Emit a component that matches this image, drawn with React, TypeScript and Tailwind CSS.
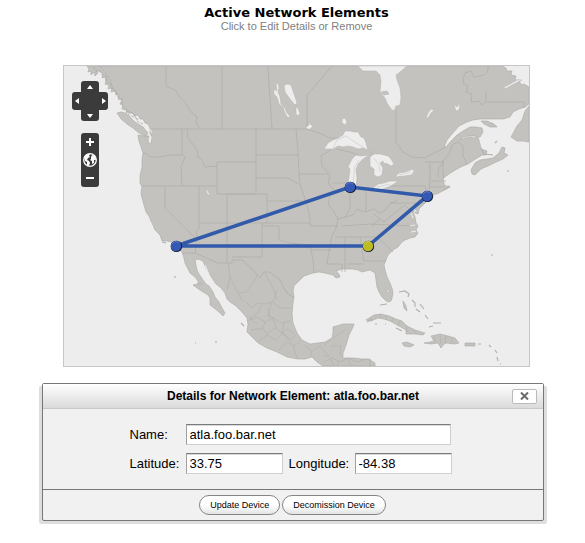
import React from "react";

const SITES = [
  { name: "losa.foo.bar.net", x: 176, y: 246, fill: "#3458b4" },
  { name: "chic.foo.bar.net", x: 350, y: 187, fill: "#3458b4" },
  { name: "newy.foo.bar.net", x: 427, y: 196, fill: "#3458b4" },
  { name: "atla.foo.bar.net", x: 368, y: 246, fill: "#bcbc22" },
];

const MAINLAND =
  "M87 66L89 69L88 72L91 71L91 75L94 72L95 76L98 73L97 70L101 72L103 74L102 78L105 77L106 81L105 84L109 85L108 89L112 88L111 92L115 91L116 95L119 95L118 99L122 100L120 104L123 105L122 109L126 110L128 113L133 113L134 116L138 115L140 119L143 119L145 123L148 124L150 128L150 133L152 138L151 143L149 144L148 140L149 136L145 136L138 135L139 141L141 147L143 153L142 160L142 167L140 176L140 183L142 187L141 193L142 198L144 205L146 212L149 216L151 221L153 225L155 230L160 235L162 241L167 241L172 242L176 247L182 252L184 258L185 263L188 269L190 273L195 277L198 281L198 284L193 285L197 288L203 292L208 295L210 298L210 305L214 308L219 312L223 316L225 313L222 308L219 302L215 297L213 292L209 286L206 284L203 280L199 274L197 270L196 265L195 260L198 259L203 261L205 266L207 270L212 278L216 284L221 288L225 293L227 299L230 302L236 306L242 312L247 318L248 324L247 332L252 337L258 343L267 348L277 352L287 357L298 359L305 359L312 357L317 362L323 366L371 366L370 359L362 359L354 358L343 358L343 353L345 348L347 342L349 335L353 327L354 324L343 324L333 327L333 333L332 338L325 342L318 343L310 344L302 340L297 333L293 323L292 313L293 303L294 297L293 291L294 286L298 282L304 276L313 273L319 272L325 273L333 275L336 278L340 277L339 274L336 271L342 269L348 269L353 269L358 270L362 272L366 271L370 270L375 273L376 280L377 287L379 292L382 297L385 300L388 302L391 301L392 298L393 293L392 288L390 283L387 277L385 270L384 265L386 260L388 255L393 250L398 247L402 242L405 240L410 238L415 237L418 233L416 230L418 226L416 223L415 217L413 212L415 209L415 213L418 214L419 209L422 206L425 203L428 199L432 197L439 193L448 188L450 186L445 186L444 183L443 179L446 176L449 174L452 172L457 169L463 166L468 164L474 160L482 155L486 155L487 151L481 149L480 144L478 137L474 138L470 137L465 138L460 140L463 137L468 136L474 136L480 137L483 132L482 128L476 127L470 127L463 131L457 135L451 141L446 147L444 147L447 140L452 134L459 126L467 122L473 120L480 119L492 119L503 119L510 117L513 112L519 109L525 107L529 104L529 87L524 84L521 85L519 80L515 80L516 76L511 75L512 71L507 71L506 68L502 66Z";
const ISLANDS = [
  "M117 113L121 112L125 113L130 117L135 122L143 127L148 133L146 136L139 133L133 128L127 124L121 119Z",
  "M481 121L487 121L494 124L497 127L490 127L484 124Z",
  "M471 170L475 163L480 160L487 159L493 158L499 153L502 147L505 148L504 153L508 155L503 159L494 163L488 166L481 169L475 175L472 174Z",
  "M529 106L525 111L522 120L517 126L511 137L517 141L523 141L529 142Z",
  "M366 320L374 315L381 314L389 316L396 319L402 321L407 326L415 330L425 333L423 335L415 334L406 334L406 330L399 326L390 321L384 319L378 318L371 321Z",
  "M424 343L430 342L434 341L431 336L440 334L448 336L455 338L459 343L454 344L447 343L444 344L441 348L438 343L431 344Z",
  "M402 343L407 342L414 345L410 347L404 346Z",
  "M465 343L475 343L475 346L465 346Z",
  "M403 301L406 306L407 311L404 308Z",
  "M370 360L375 363L375 366L370 366Z",
];
const WATER = [
  "M358 66L363 71L370 71L376 71L380 75L381 82L380 92L385 98L387 103L391 109L394 111L396 106L400 105L401 97L400 88L397 80L396 75L400 72L407 66Z",
  "M324 149L328 143L333 140L338 138L343 135L345 131L350 131L354 132L358 132L361 137L364 138L366 143L368 150L363 148L358 149L353 147L348 146L343 147L338 146L333 149Z",
  "M370 155L361 156L356 155L352 159L350 163L348 167L350 169L349 177L348 183L351 187L356 186L357 178L356 170L358 164L363 159L366 157Z",
  "M370 157L374 154L380 154L388 156L391 159L394 164L391 166L386 163L384 164L383 161L380 163L383 168L382 175L378 177L374 175L374 169L370 166Z",
  "M373 188L378 184L384 183L390 181L398 181L394 184L388 187L380 190L376 190Z",
  "M395 177L399 173L405 172L413 169L414 172L411 175L404 176Z",
  "M284 85L288 84L291 85L293 91L295 97L297 103L295 105L290 99L285 92Z",
  "M274 89L277 91L276 84L278 83L279 88L278 92L280 97L281 104L285 108L287 113L290 116L288 118L285 113L283 107L279 104L277 97L274 94Z",
  "M296 107L298 108L300 114L297 116L296 113Z",
  "M342 119L345 118L347 122L345 125L342 123Z",
  "M306 127L309 125L309 122L311 125L313 126L310 129L307 129Z",
  "M205 189L208 191L210 195L208 195Z",
  "M426 118L428 113L431 109L434 110L431 113L428 118Z",
  "M454 104L457 107L460 103L459 110L456 111Z",
  "M387 290L389 290L389 292L387 292Z",
  "M504 87L510 84L517 80L522 80L512 85L505 89Z",
];
const LAKE_ISLANDS = ["M381 92L387 91L389 94L384 95Z"];
const BORDERS = [
  "M166 66V86L175 90L179 96L185 102L191 112L197 117L196 122L199 128",
  "M151 129H306",
  "M222 66V129M268 66L272 129M307 129V95L332 66",
  "M143 153L147 154L150 157L160 157L170 155H182M182 129V154L185 157L181 167L182 186M187 129L188 138L192 143L197 150L198 157L202 160L205 167L217 166",
  "M142 186H217M217 162H256V194H217ZM165 186V208L200 243M256 129V162",
  "M199 186V229L196 232L197 237L195 253M199 223H310M227 194V262M267 194H227M267 194V223M256 178H288L293 181L298 184M256 155H298M267 201H303",
  "M296 129L298 150L299 174H328M299 174L300 184L304 196L307 205L310 218V226M262 223V257H232M262 226H279V240L290 243L310 245M310 226H338M310 250H331M310 245L313 260L314 273",
  "M336 146L329 151L321 156L322 166L330 175L328 183L334 190L330 196L328 204L334 212L338 219L336 228L332 236L329 250L327 264H342V272M333 183H349M350 192L350 208L345 218M366 192V212M338 219L345 217L353 215L357 209L365 212L374 209L379 213L384 211L390 204L397 200",
  "M342 226L370 224L414 226M335 237H377L384 234M345 237V272M360 237L364 261H386M347 264H364M377 237L387 246L393 252M372 226L380 219M390 203H425L429 190M390 186H425L427 196M374 214L384 222L391 216L398 210L405 205L413 213",
  "M306 129L316 132L324 135L329 138L341 138M336 149L350 152L358 155M370 151L377 160L383 170M396 110V142L403 152L412 157L425 158L436 152L446 147M425 162H442L449 154L453 144L459 142L463 146V156L467 164M430 163V181M438 178L438 170L444 161M431 181H446M430 187H444M430 181L429 190M443 161L443 178",
  "M471 71L465 73L463 79L464 84L468 86L466 92L472 94L471 102L479 101L482 105L486 101L486 92M471 71L474 77L484 75L488 71V66M486 102H524V108",
  "M182 253H195L218 263H232V260H242L252 269L260 278L264 272H270L280 280L283 287L289 295L294 297",
];
const MEXICO = [
  "M197 284H203M228 262L230 277L227 290M230 277L238 293L246 292L252 284M238 293L243 302M252 284L258 274M265 273L273 288L277 300M246 302L252 308L258 303L266 304L272 302M277 290L273 302L280 308L292 308M262 304L258 313L250 318M272 302L268 316L275 318M287 293L284 288",
  "M247 321L257 317L265 322L273 318L281 323L291 321M251 330L262 328L267 334L275 328L282 333L287 329L295 334M259 341L267 335L276 340L283 333L290 341L296 335M279 350L287 342L295 346L301 340M265 322L262 330M273 318L276 328M284 323L282 333L289 338M250 318L257 324M268 308L270 318M293 346L297 358M304 345L312 351L310 357M312 351L320 346L329 356H323M332 338L324 346M345 330L333 338M330 346H341L340 356M324 362L332 358L340 362L348 358L357 362L367 359M330 358L334 366M348 359L351 366M338 366V360",
  "M379 314L381 318M386 315V320M393 318L392 322M400 321L398 326M407 326V332M414 330L416 334M434 336L436 343M440 335L441 344M446 336L445 343M452 338V343",
];

const LINK = "#325aaa";

function NetworkMap() {
  return (
    <svg viewBox="64 66 465 300" className="block w-full bg-[#ededed]" role="img" aria-label="Map of network elements">
      <g fill="#c4c2be" stroke="#aaa8a5" strokeWidth="0.6" strokeLinejoin="round">
        <path d={MAINLAND} />
        {ISLANDS.map((d) => (
          <path key={d} d={d} />
        ))}
      </g>
      <g fill="none" stroke="#aeaca9" strokeWidth="0.7">
        {BORDERS.map((d) => (
          <path key={d} d={d} />
        ))}
      </g>
      <g fill="#ededed" stroke="#b4b2af" strokeWidth="0.5">
        {WATER.map((d) => (
          <path key={d} d={d} />
        ))}
      </g>
      <g fill="#c4c2be" stroke="#b4b2af" strokeWidth="0.5">
        {LAKE_ISLANDS.map((d) => (
          <path key={d} d={d} />
        ))}
      </g>
      <g fill="none" stroke="#b0aeab" strokeWidth="0.6">
        {MEXICO.map((d) => (
          <path key={d} d={d} />
        ))}
      </g>
      <path
        d="M93 67l3 4 4 0 2 4 5 2-1 4 5 3 0 4 5 3 2 6 4 2 0 6 5 4-1 4 5 3 5 2 2 4 5 2M100 66l5 6 5 8 3 8 5 7M127 111l7 3 4 6"
        fill="none"
        stroke="#adaba8"
        strokeWidth="0.8"
        strokeDasharray="3 1"
      />
      <path
        d="M333 148L337 140L346 136L353 141L366 149M353 185L354 174L355 166L359 160M374 158L379 165L380 172M377 187L390 184M399 175L411 172"
        fill="none"
        stroke="#cfcdca"
        strokeWidth="0.7"
      />
      <path
        d="M399 292l6-1 4 3-1 3M412 300l3 3 0 4M416 309l4 3M420 304l4 5M425 315l3 4M433 323l8 0M429 327l4-1M380 305l7-1M375 324h2M396 328l6 3M478 344h3M489 345l2 2M495 350l2 3M497 357l1 4M500 364h1M491 255h2M507 171h2M162 242l4 1M175 276v2M195 343h1M216 341v2M241 323l3 3M481 148l3 6 9 1M495 143l2-2M443 190l7-3M385 324h1M367 322l5-3"
        fill="none"
        stroke="#b3b1ae"
        strokeWidth="1.2"
      />
      <path
        d="M433 196l7-2M413 206l3 6M411 213l2 5M410 226l5-1M411 232l5-1M151 136l-1 4M150 129l2 4M205 265l4 9"
        fill="none"
        stroke="#ededed"
        strokeWidth="1"
      />
      <path d="M176 246L350 187L427 196L368 246Z" fill="none" stroke={LINK} strokeWidth="3.6" />
      {SITES.map((site) => (
        <g key={site.name} className="cursor-pointer">
          <circle cx={site.x + 0.4} cy={site.y + 0.4} r="5.7" fill="#111a30" />
          <circle cx={site.x} cy={site.y} r="5.2" fill={site.fill} />
          <path
            d={`M${site.x - 4} ${site.y - 2}a4.4 4.4 0 0 1 7-1`}
            fill="none"
            stroke="#fff"
            strokeOpacity="0.2"
          />
        </g>
      ))}
    </svg>
  );
}

const DARK = "flex items-center justify-center bg-[#3b3b3b] text-white";

function Arrow({ d }: { d: string }) {
  return (
    <svg viewBox="0 0 6 6" className="size-[6px]" aria-hidden="true">
      <path d={d} fill="currentColor" />
    </svg>
  );
}

function MapControls() {
  return (
    <div className="absolute top-[15px] left-2 flex flex-col items-center gap-3">
      <div className="flex flex-col items-center">
        <button aria-label="Pan up" className={`${DARK} h-[11px] w-[18px] rounded-t-[3px]`}>
          <Arrow d="M0 5L3 1L6 5Z" />
        </button>
        <div className="flex h-[18px]">
          <button aria-label="Pan left" className={`${DARK} w-[9px] rounded-l-[3px]`}>
            <Arrow d="M5 0L1 3L5 6Z" />
          </button>
          <span className="w-[18px] bg-[#3b3b3b]" />
          <button aria-label="Pan right" className={`${DARK} w-[9px] rounded-r-[3px]`}>
            <Arrow d="M1 0L5 3L1 6Z" />
          </button>
        </div>
        <button aria-label="Pan down" className={`${DARK} h-[11px] w-[18px] rounded-b-[3px]`}>
          <Arrow d="M0 1L3 5L6 1Z" />
        </button>
      </div>
      <div className="flex flex-col">
        <button aria-label="Zoom in" className={`${DARK} size-[18px] rounded-t-[3px]`}>
          <svg viewBox="0 0 8 8" className="size-2" aria-hidden="true">
            <path d="M3 0h2v3h3v2H5v3H3V5H0V3h3z" fill="currentColor" />
          </svg>
        </button>
        <button aria-label="Zoom to full extent" className={`${DARK} size-[18px]`}>
          <svg viewBox="0 0 14 14" className="size-[14px]" aria-hidden="true">
            <circle cx="7" cy="7" r="6.3" fill="#3b3b3b" stroke="currentColor" strokeWidth="1.3" />
            <path
              d="M1 4L4 1L7 1L6 3L7 4L5 5L4 7L6 8L7 10L6 13L4 12L4 9L2 8ZM8 4L9 2L12 3L13 7L11 7L11 10L9 11L9 8L7 7L8 6Z"
              fill="currentColor"
            />
          </svg>
        </button>
        <button aria-label="Zoom out" className={`${DARK} size-[18px] rounded-b-[3px]`}>
          <span className="h-0.5 w-2 bg-white" />
        </button>
      </div>
    </div>
  );
}

const FIELD =
  "h-[21px] border border-[#cfcfcf] border-t-[#7b7b7b] border-l-[#a0a0a0] bg-white px-[3px] text-[13px] shadow-[inset_0_1px_0_#d8d8d8] outline-none";
const PILL =
  "h-5 rounded-full border border-[#858585] bg-linear-to-b from-white from-50% to-[#e2e4e4] px-[10px] text-[9px] leading-[18px]";

function DetailsPanel() {
  return (
    <section className="mx-auto mt-4 w-full max-w-[502px] rounded-[2px] border border-[#777] bg-[#f1f1f1] shadow-[3px_3px_0_#dedede,-3px_3px_0_#dedede]">
      <header className="flex h-[25px] items-center border-b border-[#c8c8c8] bg-linear-to-b from-white to-[#dadada] px-[6px]">
        <span className="w-[26px]" />
        <h2 className="flex-1 text-center text-[12px] leading-4 font-bold">
          Details for Network Element: atla.foo.bar.net
        </h2>
        <button
          aria-label="Close"
          className="flex h-[15px] w-[25px] items-center justify-center rounded-[2px] border border-[#bbb] bg-white text-[#6b6b6b]"
        >
          <svg viewBox="0 0 9 8" className="h-2 w-[9px]" aria-hidden="true">
            <path d="M1 0.5L8 7.5M8 0.5L1 7.5" stroke="currentColor" strokeWidth="2" />
          </svg>
        </button>
      </header>
      <form id="details" className="mx-auto flex w-[326px] flex-col gap-2 py-[15px] text-[13px]">
        <div className="flex items-center">
          <label htmlFor="name" className="w-14">
            Name:
          </label>
          <input id="name" defaultValue="atla.foo.bar.net" className={`${FIELD} w-[265px]`} />
        </div>
        <div className="flex items-center">
          <label htmlFor="latitude" className="w-14">
            Latitude:
          </label>
          <input id="latitude" defaultValue="33.75" className={`${FIELD} w-[97px]`} />
          <label htmlFor="longitude" className="ml-[6px] w-[66px]">
            Longitude:
          </label>
          <input id="longitude" defaultValue="-84.38" className={`${FIELD} w-[97px]`} />
        </div>
      </form>
      <footer className="flex justify-center gap-0.5 border-t border-[#777] py-[5px]">
        <button className={PILL}>Update Device</button>
        <button className={PILL}>Decomission Device</button>
      </footer>
    </section>
  );
}

export default function App() {
  return (
    <main className="bg-white px-4 pt-[6px] pb-5 font-['Liberation_Sans',Arial,sans-serif] text-black">
      <header className="pl-2 text-center">
        <h1 className="font-['DejaVu_Sans',Verdana,sans-serif] text-[13px] leading-[14px] font-bold">
          Active Network Elements
        </h1>
        <p className="text-[11px] leading-3 text-[#808080]">Click to Edit Details or Remove</p>
      </header>
      <div className="mt-[33px] pl-2">
        <div className="relative mx-auto w-full max-w-[467px] border border-[#c6c6c6]">
          <NetworkMap />
          <MapControls />
        </div>
      </div>
      <DetailsPanel />
    </main>
  );
}
